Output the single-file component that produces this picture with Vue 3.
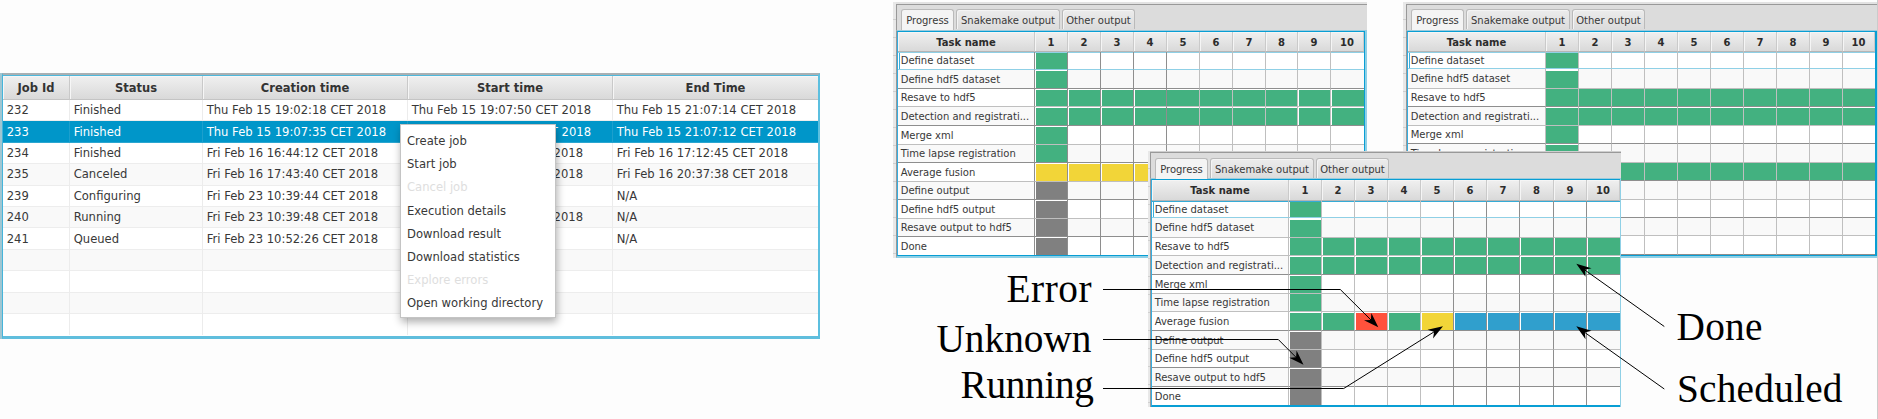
<script setup>
const columns = ['Job Id', 'Status', 'Creation time', 'Start time', 'End Time']
const jobs = [
  ['232', 'Finished', 'Thu Feb 15 19:02:18 CET 2018', 'Thu Feb 15 19:07:50 CET 2018', 'Thu Feb 15 21:07:14 CET 2018'],
  ['233', 'Finished', 'Thu Feb 15 19:07:35 CET 2018', 'Thu Feb 15 19:07:50 CET 2018', 'Thu Feb 15 21:07:12 CET 2018'],
  ['234', 'Finished', 'Fri Feb 16 16:44:12 CET 2018', 'Fri Feb 16 16:44:20 CET 2018', 'Fri Feb 16 17:12:45 CET 2018'],
  ['235', 'Canceled', 'Fri Feb 16 17:43:40 CET 2018', 'Fri Feb 16 17:43:50 CET 2018', 'Fri Feb 16 20:37:38 CET 2018'],
  ['239', 'Configuring', 'Fri Feb 23 10:39:44 CET 2018', '', 'N/A'],
  ['240', 'Running', 'Fri Feb 23 10:39:48 CET 2018', 'Fri Feb 23 10:39:55 CET 2018', 'N/A'],
  ['241', 'Queued', 'Fri Feb 23 10:52:26 CET 2018', '', 'N/A'],
  ['', '', '', '', ''],
  ['', '', '', '', ''],
  ['', '', '', '', ''],
  ['', '', '', '', ''],
]
const menu = [
  { label: 'Create job' },
  { label: 'Start job' },
  { label: 'Cancel job', off: true },
  { label: 'Execution details' },
  { label: 'Download result' },
  { label: 'Download statistics' },
  { label: 'Explore errors', off: true },
  { label: 'Open working directory' },
]

const tabs = ['Progress', 'Snakemake output', 'Other output']
const tasks = [
  'Define dataset', 'Define hdf5 dataset', 'Resave to hdf5', 'Detection and registrati...',
  'Merge xml', 'Time lapse registration', 'Average fusion', 'Define output',
  'Define hdf5 output', 'Resave output to hdf5', 'Done',
]

// One letter per step: g done, y running, r error, b scheduled, x unknown
// cols/rows are track sizes; vs/hs hold the shade of the line closing each track
// (d dark, l light, n none); vg/hg flag a white gap before each track.
const full = 'gggggggggg'
const panels = [
  {
    id: 'a',
    cols: [137, 33, 33, 33, 33, 33, 33, 33, 32, 33, 33],
    rows: [20, 18, 19, 18, 19, 19, 18, 19, 18, 19, 18, 18],
    vs: 'dddddllllln', vg: '1111000011',
    hs: 'fdldldldldn', hg: '01111010101',
    steps: ['g', 'g', full, full, 'g', 'g', 'yyyyyyyyyy', 'x', 'x', 'x', 'x'],
  },
  {
    id: 'b',
    cols: [138, 33, 33, 33, 33, 33, 33, 33, 33, 33, 32],
    rows: [20, 17, 20, 18, 19, 18, 19, 18, 19, 18, 18, 19],
    vs: 'lllllllllln', vg: '0000000000',
    hs: 'fldldldldld', hg: '02010101010',
    steps: ['g', 'g', full, full, 'g', 'g', full, 'g', 'g', 'g', 'g'],
  },
  {
    id: 'c',
    cols: [137, 33, 33, 33, 33, 33, 33, 33, 34, 33, 33],
    rows: [21, 17, 20, 18, 19, 19, 18, 19, 19, 18, 19, 18],
    vs: 'llllldddddn', vg: '1111111111',
    hs: 'flldlldlddn', hg: '02011011010',
    steps: ['g', 'g', full, full, 'g', 'g', 'ggrgybbbbb', 'x', 'x', 'x', 'x'],
  },
]
const px = (a) => a.map((n) => n + 'px').join(' ')

const arrows = [
  { points: '1103,289.5 1340.3,289.5 1373,322', tip: [1378.3, 327.3], angle: 45 },
  { points: '1103,339.5 1278.3,339.5 1298,359.3', tip: [1303.5, 364.7], angle: 45 },
  { points: '1103,388.5 1343.7,388.5 1437,330', tip: [1443, 326.2], angle: -32 },
  { points: '1664.3,326.5 1582,268', tip: [1576.3, 263.7], angle: 215.4 },
  { points: '1664.3,389 1582,330.5', tip: [1576.3, 326.3], angle: 215.4 },
]
</script>

<template>
  <main class="stage">
    <section class="jobs">
      <div class="jrow jhead">
        <div v-for="c in columns" :key="c" class="jcell">{{ c }}</div>
      </div>
      <div class="jbody">
        <div v-for="(job, i) in jobs" :key="i" class="jrow" :class="{ odd: i % 2, selected: i === 1 }">
          <div v-for="(v, k) in job" :key="k" class="jcell">{{ v }}</div>
        </div>
      </div>
    </section>

    <ul class="menu">
      <li v-for="m in menu" :key="m.label" :class="{ off: m.off }">{{ m.label }}</li>
    </ul>

    <section v-for="p in panels" :key="p.id" class="panel" :class="'panel-' + p.id">
      <div class="tabs">
        <div v-for="(t, i) in tabs" :key="t" class="tab" :class="'tab' + i">{{ t }}</div>
      </div>
      <div class="table">
        <div class="grid" :style="{ gridTemplateColumns: px(p.cols), gridTemplateRows: px(p.rows) }">
          <div class="th">Task name</div>
          <div v-for="n in 10" :key="n" class="th">{{ n }}</div>
          <template v-for="(task, r) in tasks" :key="task">
            <div class="td name" :class="['v' + p.vs[0], 'h' + p.hs[r], { odd: r % 2, first: r === 0 }]">{{ task }}</div>
            <div
              v-for="n in 10"
              :key="n"
              class="td"
              :class="['v' + p.vs[n], 'h' + p.hs[r], 'gl' + p.vg[n - 1], 'gt' + p.hg[r], { odd: r % 2, first: r === 0 }]"
            >
              <div v-if="p.steps[r][n - 1]" class="fill" :class="p.steps[r][n - 1]"></div>
            </div>
          </template>
        </div>
      </div>
    </section>

    <div class="edge"></div>

    <svg class="notes" width="1878" height="419" viewBox="0 0 1878 419">
      <g v-for="(a, i) in arrows" :key="i">
        <polyline :points="a.points" fill="none" stroke="#000" stroke-width="1" />
        <path d="M0 0L-15 -5.2L-10.5 0L-15 5.2Z" :transform="`translate(${a.tip[0]} ${a.tip[1]}) rotate(${a.angle})`" />
      </g>
      <text x="1091.5" y="302" text-anchor="end" textLength="85">Error</text>
      <text x="1091.5" y="352" text-anchor="end">Unknown</text>
      <text x="1094" y="397.5" text-anchor="end" textLength="133.5">Running</text>
      <text x="1676.5" y="340" text-anchor="start" textLength="86">Done</text>
      <text x="1677" y="402" text-anchor="start" textLength="165.5">Scheduled</text>
    </svg>
  </main>
</template>

<style>
body {
  margin: 0;
  background: #fdfdfd;
}
</style>

<style scoped>
.stage {
  position: relative;
  width: 1878px;
  height: 419px;
  overflow: hidden;
  box-sizing: border-box;
  padding-top: 73px;
  background: #fdfdfd;
  font-family: 'DejaVu Sans', sans-serif;
  color: #383838;
}
.jobs {
  width: 815px;
  height: 261px;
  border-left: 1px solid #45b4da;
  border-right: 2px solid #5cbfdf;
  border-bottom: 3px solid #60bedd;
  border-top: 2px solid #a9b0b3;
  box-shadow: -2px 0 0 #9fc6d2;
  margin-left: 2px;
  background: #fff;
  font-size: 11.58px;
}
.jrow {
  display: grid;
  grid-template-columns: 67px 133px 205px 205px 205px;
  height: 21.4px;
}
.jcell {
  box-sizing: border-box;
  border-right: 1px solid #ececec;
  border-bottom: 1px solid #ededed;
  padding-left: 3.7px;
  display: flex;
  align-items: center;
  white-space: nowrap;
}
.jcell:last-child {
  border-right: 0;
}
.jrow:last-child .jcell {
  border-bottom: 0;
}
.jrow.jhead {
  height: 25px;
  border-top: 1px solid #4db8dc;
  box-sizing: border-box;
  background: linear-gradient(#f0f0f0, #d8d8d8);
  font-size: 11.5px;
  font-weight: bold;
  color: #333;
}
.jhead .jcell {
  justify-content: center;
  padding: 1px 0 0;
  border-right-color: #c9c9c9;
  border-bottom-color: #c4c4c4;
  box-shadow: inset 1px 1px 0 #f6f6f6;
}
.jrow.odd {
  background: #f9f9f9;
}
.jrow.selected {
  background: #0096c9;
  color: #fff;
}
.selected .jcell {
  border-right-color: #1c9fcd;
  border-bottom-color: #2ba6d0;
}
.menu {
  position: absolute;
  left: 400px;
  top: 124px;
  width: 156px;
  height: 194px;
  box-sizing: border-box;
  margin: 0;
  padding: 5px 0 0 6px;
  list-style: none;
  background: #fff;
  border: 1px solid #c4c4c4;
  box-shadow: 1px 4px 8px rgba(0, 0, 0, 0.32);
  font-size: 11.58px;
}
.menu li {
  height: 23.2px;
  line-height: 23.2px;
  white-space: nowrap;
}
.menu .off {
  color: #dedede;
}

.panel {
  position: absolute;
  box-sizing: border-box;
  background: #dcdcdc;
  border-left: 3px solid #e6e6e6;
  font-size: 10px;
}
.panel::before {
  content: '';
  position: absolute;
  left: -3px;
  top: 0;
  bottom: 0;
  width: 3px;
  background: repeating-linear-gradient(#e8e8e8 0 17px, #cfcfcf 17px 18px);
}
.panel-c::before {
  left: -2px;
  width: 2px;
}
.panel-a {
  left: 893px;
  top: 2px;
  width: 474px;
}
.panel-b {
  left: 1403px;
  top: 2px;
  width: 474px;
}
.panel-c {
  left: 1148px;
  top: 151px;
  width: 473px;
  border-left-width: 2px;
}
.tabs {
  display: flex;
  gap: 2px;
  height: 26px;
  box-sizing: border-box;
  padding: 4px 0 0 4px;
  border-top: 1px solid #999;
  border-left: 1px solid #999;
  box-shadow: 0 -2px 0 #e2e2e2;
  margin-top: 2px;
}
.panel-c .tabs {
  margin-top: 1px;
  padding-top: 5px;
  box-shadow: 0 -1px 0 #cfcfcf;
}
.tab {
  box-sizing: border-box;
  height: 20px;
  border: 1px solid #bababa;
  border-bottom: 0;
  border-radius: 3px 3px 0 0;
  background: linear-gradient(#ececec, #dcdcdc);
  box-shadow: inset 1px 1px 0 #f4f4f4;
  display: flex;
  align-items: center;
  justify-content: center;
  white-space: nowrap;
  padding-top: 1px;
}
.tab0 {
  width: 53px;
  height: 21px;
  padding-top: 0;
  background: #f4f4f4;
}
.tab1 {
  width: 104px;
}
.tab2 {
  width: 73px;
}
.table {
  border-left: 1px solid #999;
  border-top: 1px solid #9dcbdc;
}
.panel-a .table,
.panel-b .table {
  border-bottom: 2px solid #8fd0e6;
}
.grid {
  display: grid;
  border: 1px solid #089ed4;
  border-left-color: #35ade0;
  background: #fff;
}
.panel-a .table {
  border-right: 2px solid #8fd0e6;
}
.panel-b .grid {
  border-right-width: 2px;
}
.panel-c .grid {
  border-bottom-width: 2px;
}
.panel-c .table {
  border-right: 1px solid #8fd0e6;
}
.th,
.td {
  box-sizing: border-box;
  min-width: 0;
  display: flex;
}
.th {
  align-items: center;
  justify-content: center;
  padding-top: 1px;
  font-weight: bold;
  color: #2c2c2c;
  background: linear-gradient(#f0f0f0, #d9d9d9);
  border-right: 1px solid #cacaca;
  border-bottom: 1px solid #b5b5b5;
  box-shadow: inset 1px 1px 0 #f5f5f5;
}
.td {
  background: #fff;
  border: 0 solid #bdbdbd;
}
.td.odd {
  background: #f9f9f9;
}
.name {
  align-items: center;
  padding-left: 2.7px;
  white-space: nowrap;
}
.vd {
  border-right: 1px solid #8e8e8e;
}
.vl {
  border-right: 1px solid #bfbfbf;
}
.hd {
  border-bottom: 1px solid #8e8e8e;
}
.hl {
  border-bottom: 1px solid #bfbfbf;
}
.hf {
  border-bottom: 1px solid #8fd0e6;
}
.first {
  box-shadow: inset 0 1px 0 #8fd0e6;
}
.name.first {
  box-shadow: inset 0 1px 0 #8fd0e6, inset 1px 0 0 #fff, inset 2px 0 0 #3caedb;
}
.panel-c .first {
  box-shadow: inset 0 1px 0 #35abd6;
}
.panel-c .name.first {
  box-shadow: inset 0 1px 0 #35abd6, inset 1px 0 0 #fff, inset 2px 0 0 #3caedb;
}
.gl1 {
  padding-left: 1px;
}
.gt1 {
  padding-top: 1px;
}
.gt2 {
  padding-top: 2px;
}
.td.first:not(.name) {
  padding-top: 1px;
}
.td:has(.fill) {
  background: #fff;
}
.fill {
  flex: 1;
}
.g {
  background: #43b180;
}
.y {
  background: #f2d538;
}
.r {
  background: #ff523c;
}
.b {
  background: #309fcd;
}
.x {
  background: #808080;
}
.edge {
  position: absolute;
  right: 0;
  top: 0;
  width: 1px;
  height: 419px;
  background: #cbcbcb;
}
.notes {
  position: absolute;
  left: 0;
  top: 0;
}
.notes text {
  font-family: 'Liberation Serif', serif;
  font-size: 39.3px;
  fill: #000;
}
</style>
